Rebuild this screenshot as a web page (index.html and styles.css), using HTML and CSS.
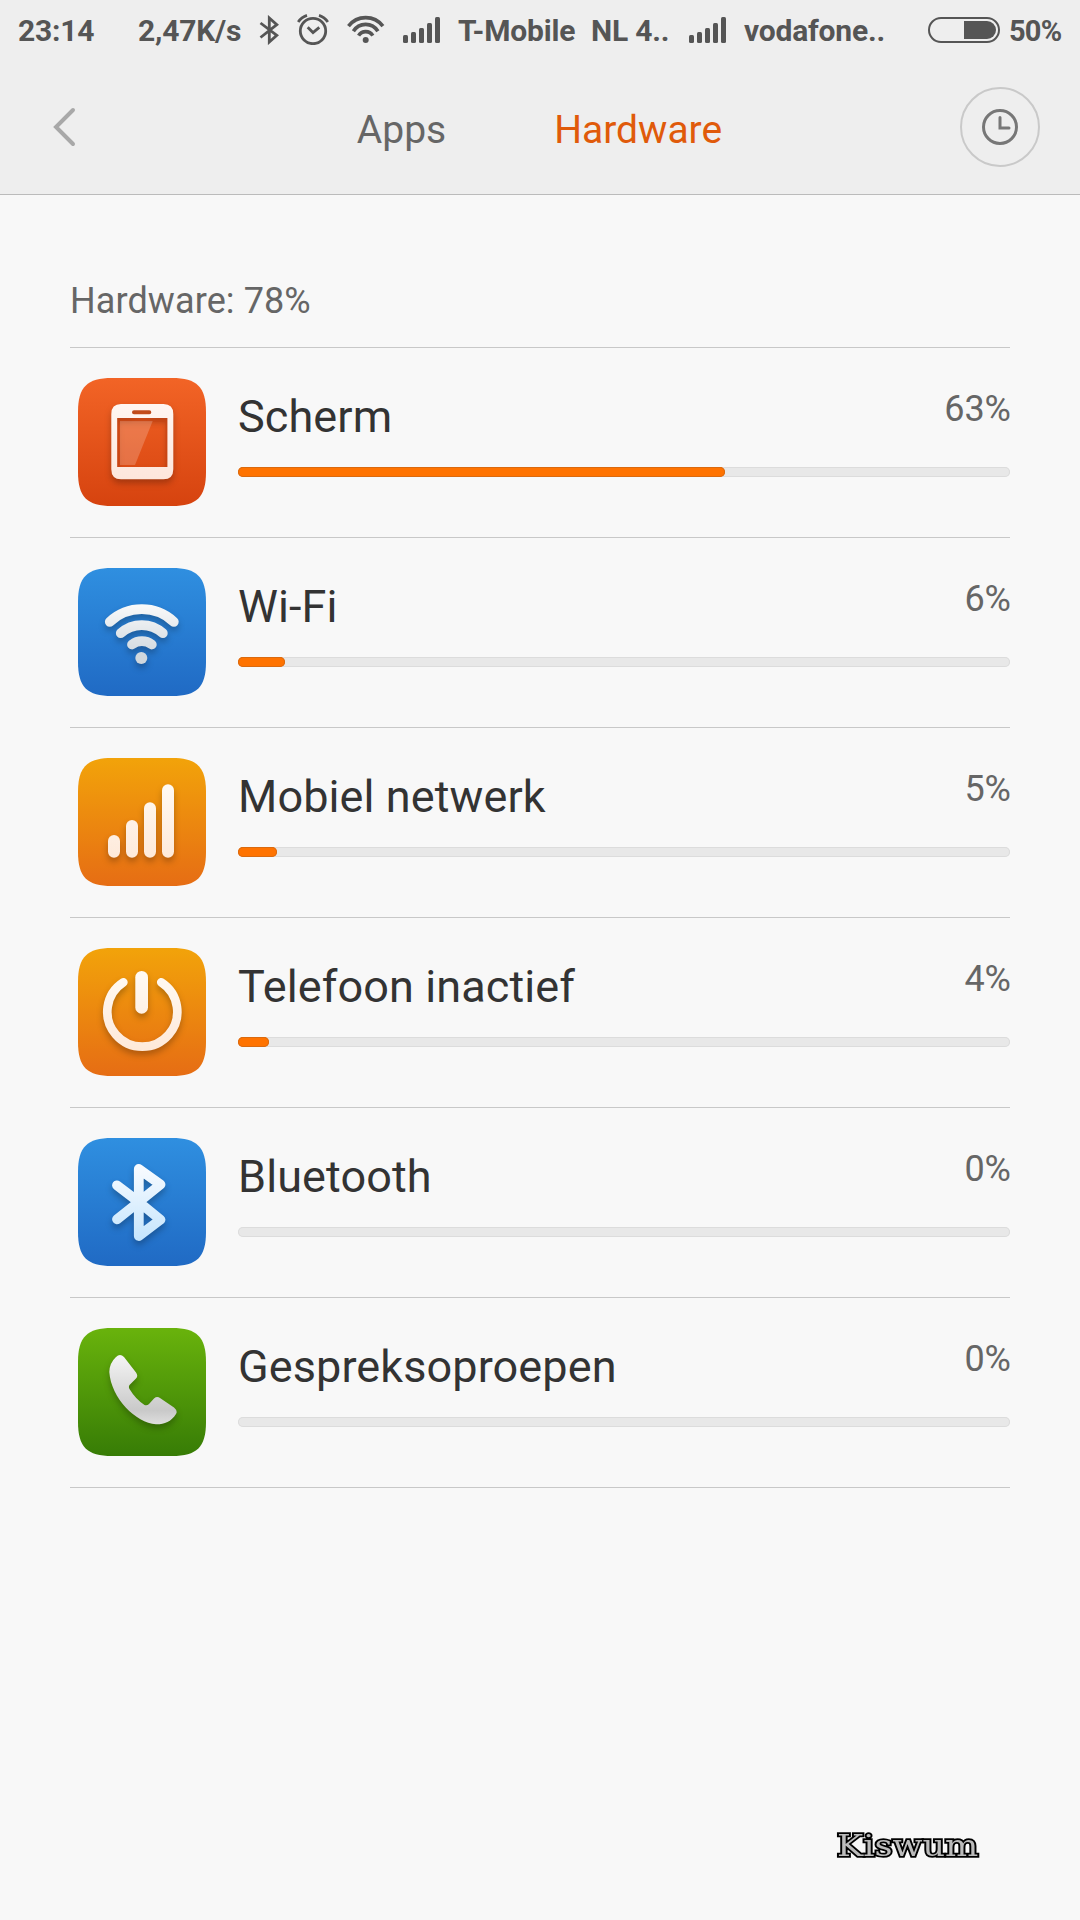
FILE: index.html
```html
<!DOCTYPE html>
<html lang="nl">
<head>
    <meta charset="UTF-8">
    <meta name="viewport" content="width=device-width, initial-scale=1.0">
    <title>Hardware</title>
    <link rel="stylesheet" href="styles.css">
</head>
<body>
    <svg class="defs" width="0" height="0">
        <defs>
            <path id="tile" d="M0 34C0 9 9 0 34 0H94C119 0 128 9 128 34V94C128 119 119 128 94 128H34C9 128 0 119 0 94Z"/>
            <g id="signal">
                <rect x="0" y="18" width="5" height="8" rx="1.5"/>
                <rect x="8" y="15" width="5" height="11" rx="1.5"/>
                <rect x="16" y="11" width="5" height="15" rx="1.5"/>
                <rect x="24" y="6" width="5" height="20" rx="1.5"/>
                <rect x="32" y="0" width="5" height="26" rx="1.5"/>
            </g>
            <linearGradient id="red" x2="0" y2="1"><stop offset="0" stop-color="#f26426"/><stop offset="1" stop-color="#d6430f"/></linearGradient>
            <linearGradient id="blue" x2="0" y2="1"><stop offset="0" stop-color="#2f8fe0"/><stop offset="1" stop-color="#206ac4"/></linearGradient>
            <linearGradient id="orange" x2="0" y2="1"><stop offset="0" stop-color="#f2a30a"/><stop offset="1" stop-color="#e66d14"/></linearGradient>
            <linearGradient id="green" x2="0" y2="1"><stop offset="0" stop-color="#69b30c"/><stop offset="1" stop-color="#377c06"/></linearGradient>
            <linearGradient id="cream" gradientUnits="userSpaceOnUse" x1="0" y1="25" x2="0" y2="102"><stop offset="0" stop-color="#fffaf3"/><stop offset="1" stop-color="#fee9d9"/></linearGradient>
            <linearGradient id="rose" x2="0" y2="1"><stop offset="0" stop-color="#fff6f1"/><stop offset="1" stop-color="#fde6dc"/></linearGradient>
            <linearGradient id="silver" gradientUnits="userSpaceOnUse" x1="0" y1="36" x2="0" y2="96"><stop offset="0" stop-color="#fafafa"/><stop offset="1" stop-color="#c9d2da"/></linearGradient>
            <linearGradient id="ice" gradientUnits="userSpaceOnUse" x1="0" y1="26" x2="0" y2="102"><stop offset="0" stop-color="#fafcff"/><stop offset="1" stop-color="#c5e5fd"/></linearGradient>
            <linearGradient id="grey" x2="0" y2="1"><stop offset="0" stop-color="#f5f5f5"/><stop offset=".8" stop-color="#c9c9c9"/><stop offset="1" stop-color="#dedede"/></linearGradient>
        </defs>
    </svg>

    <div class="header">
        <div class="status">
            <span>23:14</span>
            <span>2,47K/s</span>
            <svg class="line" width="20" height="30"><path d="M1.5 8L17.8 20.4L10.3 27V3L17.8 9.6L1.5 22.5"/></svg>
            <svg class="line alarm" width="32" height="32">
                <circle cx="16" cy="18" r="12.7"/>
                <path d="M10.7 14.3L16 19.5L22.3 14.3M1.2 9Q4.5 4 10 2.3M30.8 9Q27.5 4 22 2.3"/>
            </svg>
            <svg class="line wifi" width="40" height="30">
                <path d="M2.5 11.2A21.6 21.6 0 0 1 36.9 11.2M7.4 16.3A14.3 14.3 0 0 1 31.9 16.3M12.6 20.6A8.3 8.3 0 0 1 26.8 20.6"/>
                <circle class="dot" cx="19.7" cy="25" r="3"/>
            </svg>
            <svg width="37" height="26"><use href="#signal"/></svg>
            <span>T-Mobile</span>
            <span>NL 4..</span>
            <svg width="37" height="26"><use href="#signal"/></svg>
            <span>vodafone..</span>
            <svg width="72" height="26">
                <rect class="shell" x="1" y="1" width="70" height="24" rx="12"/>
                <path d="M36 4H59A9 9 0 0 1 59 22H36Z"/>
            </svg>
            <span class="charge">50%</span>
        </div>
        <div class="nav">
            <svg class="back" width="24" height="40"><path d="M21 3L4 20L21 37"/></svg>
            <div class="tabs">
                <span class="tab">Apps</span>
                <span class="tab active">Hardware</span>
            </div>
            <div class="history">
                <svg width="36" height="36"><circle cx="18" cy="18" r="16.5"/><path d="M18 8.5V19H27"/></svg>
            </div>
        </div>
    </div>

    <div class="content">
        <div class="summary">Hardware: 78%</div>
        <div class="list">
            <div class="row">
                <svg class="icon" width="128" height="128">
                    <use href="#tile" fill="url(#red)"/>
                    <path class="raised" fill="url(#rose)" fill-rule="evenodd" d="M43 26H85.5Q95.3 26 95.3 36V91.3Q95.3 101.3 85.5 101.3H43Q33.3 101.3 33.3 91.3V36Q33.3 26 43 26ZM39.3 40V89H89.3V40ZM56 32.2A2 2 0 0 0 56 36.2H71.3A2 2 0 0 0 71.3 32.2Z"/>
                    <path fill="#c94312" fill-opacity=".55" d="M39.3 40H89.3V89H87.5V44H41.5V89H39.3Z"/>
                    <path fill="#fff" fill-opacity=".2" d="M42 43H74.7L57 87H42Z"/>
                </svg>
                <div class="info">
                    <div class="text"><span class="name">Scherm</span><span class="percent">63%</span></div>
                    <div class="bar"><div class="fill" style="width: 63.1%"></div></div>
                </div>
            </div>
            <div class="row">
                <svg class="icon" width="128" height="128">
                    <use href="#tile" fill="url(#blue)"/>
                    <g class="raised" fill="none" stroke="url(#silver)" stroke-width="9.8" stroke-linecap="round">
                        <path d="M31.8 53.8A47 47 0 0 1 95.8 53.8M42.8 65.2A31.2 31.2 0 0 1 84.8 65.2M54 76.5A16 16 0 0 1 73.8 76.5"/>
                        <circle cx="63.3" cy="90" r="6" fill="#d0d7dd" stroke="none"/>
                    </g>
                </svg>
                <div class="info">
                    <div class="text"><span class="name">Wi-Fi</span><span class="percent">6%</span></div>
                    <div class="bar"><div class="fill" style="width: 6.1%"></div></div>
                </div>
            </div>
            <div class="row">
                <svg class="icon" width="128" height="128">
                    <use href="#tile" fill="url(#orange)"/>
                    <g class="raised" fill="url(#cream)">
                        <rect x="30" y="77" width="12" height="22.7" rx="6"/>
                        <rect x="48" y="62" width="12" height="37.7" rx="6"/>
                        <rect x="66" y="44.3" width="12" height="55.4" rx="6"/>
                        <rect x="84" y="26.3" width="12" height="73.4" rx="6"/>
                    </g>
                </svg>
                <div class="info">
                    <div class="text"><span class="name">Mobiel netwerk</span><span class="percent">5%</span></div>
                    <div class="bar"><div class="fill" style="width: 5.1%"></div></div>
                </div>
            </div>
            <div class="row">
                <svg class="icon" width="128" height="128">
                    <use href="#tile" fill="url(#orange)"/>
                    <g class="raised">
                        <path fill="none" stroke="url(#cream)" stroke-width="8.7" stroke-linecap="round" d="M45.3 34.3A35 35 0 1 0 83.3 34.3"/>
                        <rect fill="url(#cream)" x="57.3" y="23" width="12.7" height="42.7" rx="6.3"/>
                    </g>
                </svg>
                <div class="info">
                    <div class="text"><span class="name">Telefoon inactief</span><span class="percent">4%</span></div>
                    <div class="bar"><div class="fill" style="width: 4%"></div></div>
                </div>
            </div>
            <div class="row">
                <svg class="icon" width="128" height="128">
                    <use href="#tile" fill="url(#blue)"/>
                    <path class="raised" fill="none" stroke="url(#ice)" stroke-width="9.8" stroke-linecap="round" stroke-linejoin="round" d="M39 47.3L60.8 64L82.5 81.7L60.8 98V31L82.5 46.5L60.8 64L39 81.3"/>
                </svg>
                <div class="info">
                    <div class="text"><span class="name">Bluetooth</span><span class="percent">0%</span></div>
                    <div class="bar"></div>
                </div>
            </div>
            <div class="row">
                <svg class="icon" width="128" height="128">
                    <use href="#tile" fill="url(#green)"/>
                    <path class="raised" fill="url(#grey)" d="M38 29Q42 25 46 29L58 44.5Q60.5 48 58 50.5L51.5 57Q50.3 59 51.5 61Q57.5 71 66.5 77Q69 78 71 76L76 70.5Q79 68 82 70L96 79.5Q100 83 98 86C93 94 86 96.5 78 96.3C58 95 33 70 31.3 44Q31.5 35 38 29Z"/>
                </svg>
                <div class="info">
                    <div class="text"><span class="name">Gespreksoproepen</span><span class="percent">0%</span></div>
                    <div class="bar"></div>
                </div>
            </div>
        </div>
    </div>

    <div class="signature">Kiswum</div>
</body>
</html>
```
FILE: styles.css
```css
body {
    margin: 0;
    position: relative;
    height: 1920px;
    overflow: hidden;
    background-color: #f8f8f8;
    color: #666;
    font-family: Roboto, sans-serif;
}
.defs {
    position: absolute;
}
.header {
    background-color: #eee;
    border-bottom: 1px solid #bbb;
}
.status {
    display: grid;
    grid-template-columns: 120px 121px 38px 49px 57px 55px 133px 98px 55px 184px 81px auto;
    align-items: center;
    height: 60px;
    padding-left: 18px;
    color: #555;
    fill: #555;
    font-size: 30px;
    font-weight: bold;
    letter-spacing: -0.2px;
    white-space: nowrap;
}
.status span {
    padding-top: 1px;
}
.status .charge {
    font-size: 29px;
    letter-spacing: -0.8px;
}
.line {
    fill: none;
    stroke: #555;
    stroke-width: 2.8;
}
.alarm {
    margin-top: -2px;
}
.wifi {
    stroke-width: 3.6;
}
.dot {
    fill: #555;
    stroke: none;
}
.shell {
    fill: none;
    stroke: #555;
    stroke-width: 2;
}
.nav {
    display: flex;
    align-items: center;
    justify-content: space-between;
    height: 134px;
    padding: 0 40px 0 52px;
}
.back {
    fill: none;
    stroke: #a8a8a8;
    stroke-width: 4;
    stroke-linecap: round;
}
.tabs {
    display: flex;
    gap: 108px;
    margin-left: 43px;
    padding-top: 5px;
    font-size: 39px;
}
.active {
    color: #e05a0a;
}
.history {
    display: flex;
    align-items: center;
    justify-content: center;
    box-sizing: border-box;
    width: 80px;
    height: 80px;
    border: 2px solid #c9c9c9;
    border-radius: 50%;
}
.history svg {
    fill: none;
    stroke: #777;
    stroke-width: 3;
    stroke-linecap: round;
}
.content {
    padding: 80px 70px 0;
}
.summary {
    margin-bottom: 20px;
    font-size: 36px;
    line-height: 52px;
    letter-spacing: 0.1px;
}
.list {
    border-bottom: 1px solid #c8c8c8;
}
.row {
    display: flex;
    gap: 32px;
    padding: 30px 0 31px 8px;
    border-top: 1px solid #c8c8c8;
}
.icon {
    flex: none;
}
.raised {
    filter: drop-shadow(0 4px 3px rgba(0, 0, 0, 0.25));
}
.info {
    flex: 1;
}
.text {
    display: flex;
    justify-content: space-between;
    height: 77px;
    margin-bottom: 12px;
}
.name {
    color: #333;
    font-size: 45px;
    line-height: 77px;
    letter-spacing: 0.1px;
}
.percent {
    margin-right: -1px;
    font-size: 36px;
    line-height: 62px;
}
.bar {
    height: 10px;
    border-radius: 5px;
    background-color: #e8e8e8;
    box-shadow: inset 0 0 0 1px #dcdcdc;
}
.fill {
    height: 10px;
    border-radius: 5px;
    background-color: #ff7300;
    box-shadow: inset 0 0 0 1px #d96a10;
}
.signature {
    position: absolute;
    left: 837px;
    top: 1828px;
    color: #bbb;
    font-family: "DejaVu Serif", serif;
    font-size: 30px;
    line-height: 36px;
    transform: scaleX(1.17);
    transform-origin: left;
    -webkit-text-stroke: 3.4px #000;
    paint-order: stroke fill;
}
```
